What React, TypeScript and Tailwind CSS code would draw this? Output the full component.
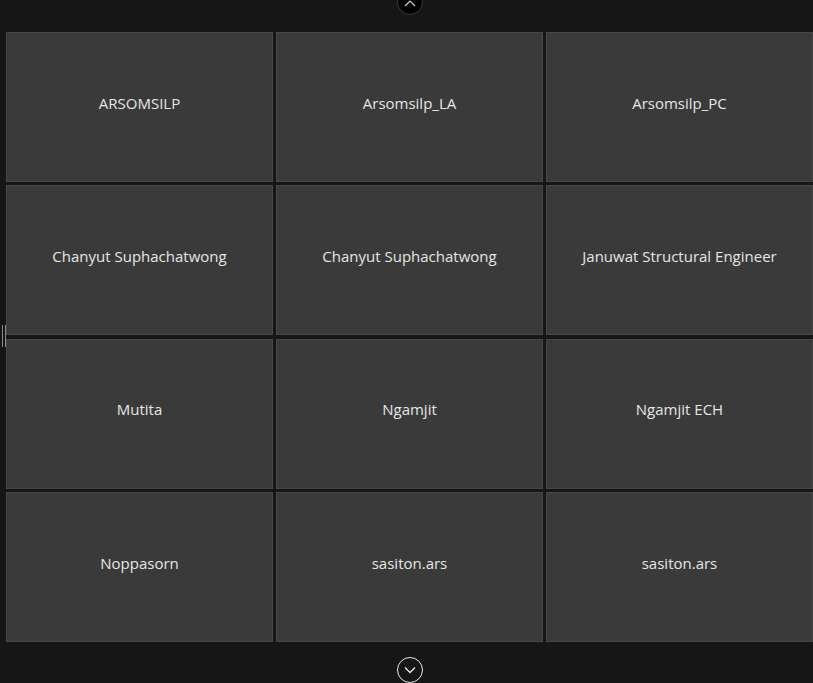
const NAMES = [
  'ARSOMSILP',
  'Arsomsilp_LA',
  'Arsomsilp_PC',
  'Chanyut Suphachatwong',
  'Chanyut Suphachatwong',
  'Januwat Structural Engineer',
  'Mutita',
  'Ngamjit',
  'Ngamjit ECH',
  'Noppasorn',
  'sasiton.ars',
  'sasiton.ars',
]

function Tile({ name }: { name: string }) {
  return (
    <div className="h-[150px] flex items-center justify-center pb-[8px] bg-[#3a3a3a] border border-[#474747] text-[15px] text-[#e6e6e6]">
      {name}
    </div>
  )
}

export default function App() {
  return (
    <div
      className="relative w-[813px] h-[683px] overflow-hidden bg-[#161616]"
      style={{ fontFamily: '"Open Sans", "Noto Sans", sans-serif' }}
    >
      {/* scroll up */}
      <div className="absolute left-[397px] top-[-11px] w-[26px] h-[26px] rounded-full bg-black border border-[#3a3a3a] flex items-end justify-center pb-[7px]">
        <svg width="12" height="8" viewBox="0 0 12 8" fill="none" stroke="#d0d0d0" strokeWidth="1.2">
          <path d="M1 7 L6 2 L11 7" />
        </svg>
      </div>

      {/* side handle */}
      <div className="absolute left-[2px] top-[325px] flex gap-[2px]">
        <div className="w-px h-[22px] bg-[#8a8a8a]" />
        <div className="w-px h-[22px] bg-[#8a8a8a]" />
      </div>

      <div className="pt-[32px] pl-[6px] grid grid-cols-[267px_267px_267px] gap-x-[3px] gap-y-[3.33px]">
        {NAMES.map((n, i) => (
          <Tile key={i} name={n} />
        ))}
      </div>

      {/* scroll down */}
      <div className="absolute left-[397px] top-[657px] w-[26px] h-[26px] rounded-full border-[1.5px] border-[#e8e8e8] flex items-center justify-center">
        <svg width="12" height="8" viewBox="0 0 12 8" fill="none" stroke="#e8e8e8" strokeWidth="1.3">
          <path d="M1 1.5 L6 6.5 L11 1.5" />
        </svg>
      </div>
    </div>
  )
}
